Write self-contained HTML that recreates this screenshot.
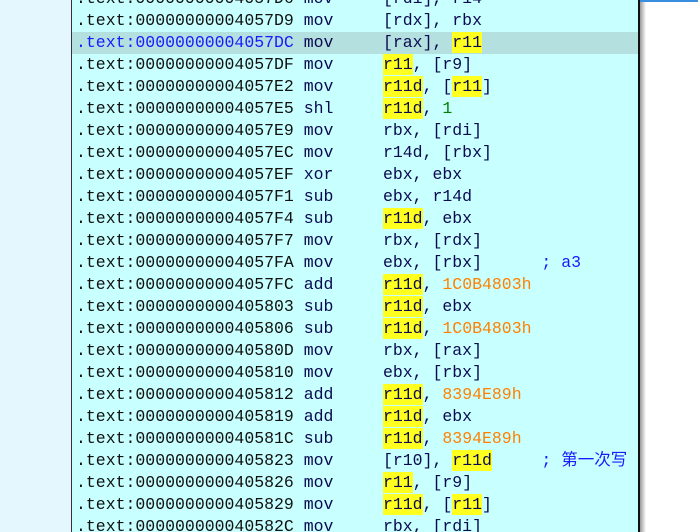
<!DOCTYPE html>
<html><head><meta charset="utf-8"><style>
body{margin:0;width:698px;height:532px;overflow:hidden;background:#fff;position:relative;font-family:"Liberation Mono",monospace;}
#left{position:absolute;left:0;top:0;width:71px;height:532px;background:#e4f7ff;border-right:1px solid #333;}
#code{position:absolute;left:72px;top:0;width:566px;height:532px;background:#c8ffff;overflow:hidden;}
#bord{position:absolute;left:638px;top:0;width:2px;height:532px;background:#111;}
#sh{position:absolute;left:640px;top:0;width:6px;height:532px;background:linear-gradient(to right,#999,#fff);}
#topl{position:absolute;left:640px;top:0;width:58px;height:2px;background:#3a8ee0;}
.r{position:absolute;left:0;width:566px;height:22px;line-height:22px;font-size:16.5px;white-space:pre;color:#0a0a50;padding-left:4px;box-sizing:border-box;}
.a{color:#111;}
.hl{background:#b4e0e0;}
.hl .a{color:#1a1aff;}
.y{background:#ffff20;display:inline-block;height:21px;}
.n{color:#ff8000;}
.c{color:#1a1aff;font-family:"Liberation Mono","Noto Sans CJK SC",monospace;}
</style></head><body>
<div id="left"></div>
<div id="code">
<div class="r" style="top:-12px"><span class="a">.text:00000000004057D6</span> mov     [rdi], r14</div>
<div class="r" style="top:10px"><span class="a">.text:00000000004057D9</span> mov     [rdx], rbx</div>
<div class="r hl" style="top:32px"><span class="a">.text:00000000004057DC</span> mov     [rax], <span class="y">r11</span></div>
<div class="r" style="top:54px"><span class="a">.text:00000000004057DF</span> mov     <span class="y">r11</span>, [r9]</div>
<div class="r" style="top:76px"><span class="a">.text:00000000004057E2</span> mov     <span class="y">r11d</span>, [<span class="y">r11</span>]</div>
<div class="r" style="top:98px"><span class="a">.text:00000000004057E5</span> shl     <span class="y">r11d</span>, <span style="color:#008000">1</span></div>
<div class="r" style="top:120px"><span class="a">.text:00000000004057E9</span> mov     rbx, [rdi]</div>
<div class="r" style="top:142px"><span class="a">.text:00000000004057EC</span> mov     r14d, [rbx]</div>
<div class="r" style="top:164px"><span class="a">.text:00000000004057EF</span> xor     ebx, ebx</div>
<div class="r" style="top:186px"><span class="a">.text:00000000004057F1</span> sub     ebx, r14d</div>
<div class="r" style="top:208px"><span class="a">.text:00000000004057F4</span> sub     <span class="y">r11d</span>, ebx</div>
<div class="r" style="top:230px"><span class="a">.text:00000000004057F7</span> mov     rbx, [rdx]</div>
<div class="r" style="top:252px"><span class="a">.text:00000000004057FA</span> mov     ebx, [rbx]      <span class="c">; a3</span></div>
<div class="r" style="top:274px"><span class="a">.text:00000000004057FC</span> add     <span class="y">r11d</span>, <span class="n">1C0B4803h</span></div>
<div class="r" style="top:296px"><span class="a">.text:0000000000405803</span> sub     <span class="y">r11d</span>, ebx</div>
<div class="r" style="top:318px"><span class="a">.text:0000000000405806</span> sub     <span class="y">r11d</span>, <span class="n">1C0B4803h</span></div>
<div class="r" style="top:340px"><span class="a">.text:000000000040580D</span> mov     rbx, [rax]</div>
<div class="r" style="top:362px"><span class="a">.text:0000000000405810</span> mov     ebx, [rbx]</div>
<div class="r" style="top:384px"><span class="a">.text:0000000000405812</span> add     <span class="y">r11d</span>, <span class="n">8394E89h</span></div>
<div class="r" style="top:406px"><span class="a">.text:0000000000405819</span> add     <span class="y">r11d</span>, ebx</div>
<div class="r" style="top:428px"><span class="a">.text:000000000040581C</span> sub     <span class="y">r11d</span>, <span class="n">8394E89h</span></div>
<div class="r" style="top:450px"><span class="a">.text:0000000000405823</span> mov     [r10], <span class="y">r11d</span>     <span class="c">; 第一次写</span></div>
<div class="r" style="top:472px"><span class="a">.text:0000000000405826</span> mov     <span class="y">r11</span>, [r9]</div>
<div class="r" style="top:494px"><span class="a">.text:0000000000405829</span> mov     <span class="y">r11d</span>, [<span class="y">r11</span>]</div>
<div class="r" style="top:516px"><span class="a">.text:000000000040582C</span> mov     rbx, [rdi]</div>
</div>
<div id="bord"></div><div id="sh"></div><div id="topl"></div>
</body></html>
